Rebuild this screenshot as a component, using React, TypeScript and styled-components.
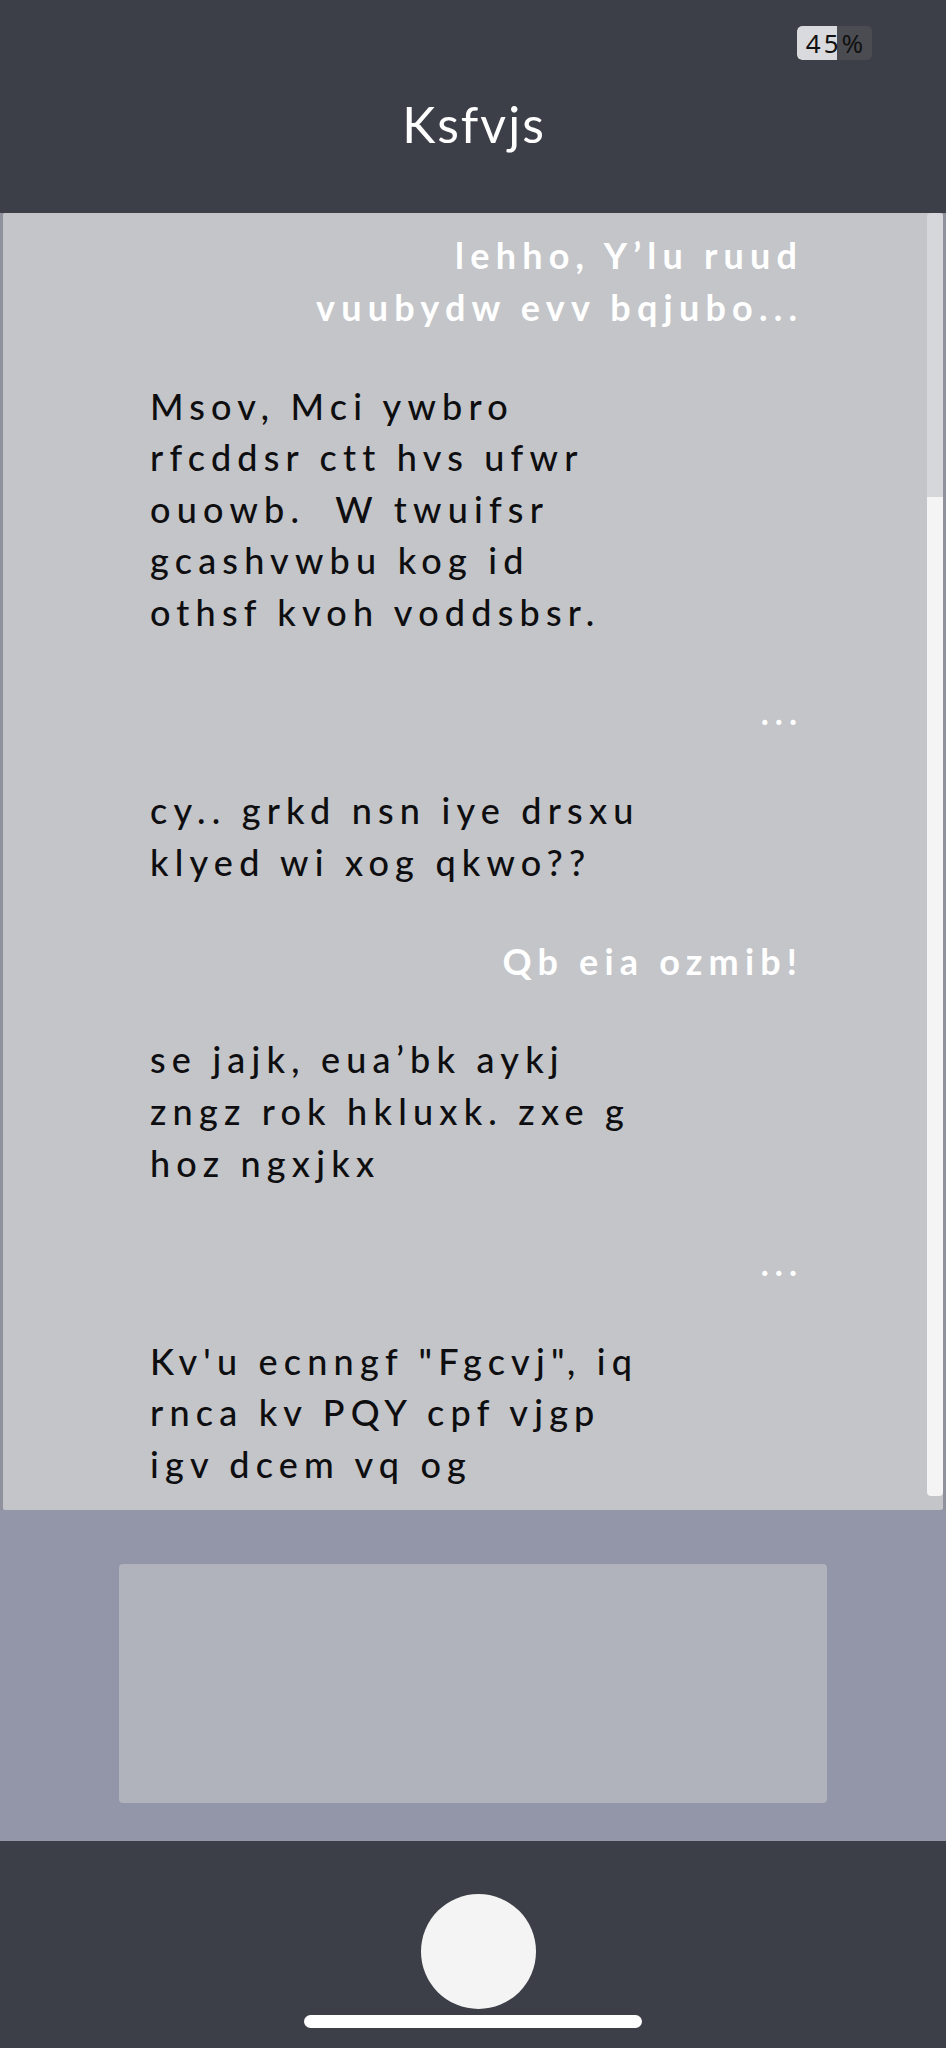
import React from "react";
import styled, { createGlobalStyle } from "styled-components";

const GlobalStyle = createGlobalStyle`
  html, body {
    margin: 0;
    padding: 0;
    background: #3d3f48;
  }
  * { box-sizing: border-box; }
`;

const FONT = `"Lato", "Noto Sans", "DejaVu Sans", sans-serif`;
const SPACING = 6.2;

const Screen = styled.div`
  width: 946px;
  height: 2048px;
  display: flex;
  flex-direction: column;
  background: #3d3f48;
  font-family: ${FONT};
  overflow: hidden;
`;

const Header = styled.header`
  height: 213px;
  flex: none;
  display: flex;
  flex-direction: column;
  align-items: center;
  background: #3d3f48;
`;

const StatusRow = styled.div`
  align-self: stretch;
  display: flex;
  justify-content: flex-end;
  padding: 26px 74px 0 0;
`;

const Battery = styled.div`
  position: relative;
  width: 75px;
  height: 34px;
  border-radius: 5px;
  background: #4b4c52;
  overflow: hidden;
  display: flex;
  align-items: center;
  justify-content: center;
`;

const BatteryFill = styled.div`
  position: absolute;
  left: 0;
  top: 0;
  bottom: 0;
  background: #d9dadd;
  border-radius: 5px 0 0 5px;
`;

const BatteryText = styled.span`
  position: relative;
  margin-left: 3px;
  font-family: "Noto Sans", "DejaVu Sans", sans-serif;
  font-size: 26px;
  line-height: 1;
  letter-spacing: 3px;
  color: #111;
`;

const Title = styled.h1`
  margin: 34px 0 0 2px;
  font-family: ${FONT};
  font-weight: 400;
  font-size: 50px;
  line-height: 60px;
  letter-spacing: 2px;
  color: #ffffff;
`;

const PanelFrame = styled.div`
  flex: none;
  height: 1297px;
  padding: 0 3px;
  background: #8f919d;
  display: flex;
`;

const ChatPanel = styled.section`
  flex: 1;
  display: flex;
  background: #c3c5c9;
  border-radius: 2px;
  overflow: hidden;
`;

const MessageList = styled.div`
  flex: 1;
  display: flex;
  flex-direction: column;
  gap: 47.4px;
  padding: 17px 130px 0 147px;
`;

const Message = styled.p<{ $mine: boolean }>`
  margin: 0;
  white-space: pre;
  font-family: ${FONT};
  font-size: 36px;
  line-height: 51.6px;
  letter-spacing: ${SPACING}px;
  font-weight: ${(p) => (p.$mine ? 700 : 500)};
  color: ${(p) => (p.$mine ? "#ffffff" : "#0e0e10")};
  text-align: ${(p) => (p.$mine ? "right" : "left")};
  margin-right: ${(p) => (p.$mine ? `-${SPACING}px` : "0")};
`;

const Typing = styled.p`
  margin: 0 -6px 0 0;
  text-align: right;
  font-family: ${FONT};
  font-size: 34px;
  line-height: 51.6px;
  font-weight: 700;
  letter-spacing: 6px;
  color: #ffffff;
`;

const ScrollTrack = styled.div`
  flex: none;
  width: 16px;
  padding-bottom: 14px;
  display: flex;
  flex-direction: column;
`;

const ScrollThumb = styled.div`
  height: 284px;
  background: #d6d7da;
  border-radius: 4px 4px 0 0;
`;

const ScrollRest = styled.div`
  flex: 1;
  background: #f4f4f5;
  border-radius: 0 0 4px 4px;
`;

const Composer = styled.div`
  flex: none;
  height: 331px;
  background: #9396a8;
  padding: 54px 119px 38px 119px;
  display: flex;
`;

const InputBox = styled.div`
  flex: 1;
  background: #b0b2bc;
  border-radius: 4px;
`;

const BottomBar = styled.footer`
  flex: 1;
  background: #3d3f48;
  display: flex;
  flex-direction: column;
  align-items: center;
  padding-top: 53px;
`;

const RecordButton = styled.button`
  width: 115px;
  height: 115px;
  border-radius: 50%;
  border: none;
  padding: 0;
  margin-left: 10px;
  background: #f4f4f4;
`;

const HomeIndicator = styled.div`
  width: 338px;
  height: 13px;
  margin-top: 6px;
  border-radius: 7px;
  background: #ffffff;
`;

type Item =
  | { kind: "msg"; mine: boolean; text: string }
  | { kind: "typing" };

const items: Item[] = [
  { kind: "msg", mine: true, text: "lehho, Y’lu ruud\nvuubydw evv bqjubo..." },
  {
    kind: "msg",
    mine: false,
    text:
      "Msov, Mci ywbro\nrfcddsr ctt hvs ufwr\nouowb.  W twuifsr\ngcashvwbu kog id\nothsf kvoh voddsbsr.",
  },
  { kind: "typing" },
  { kind: "msg", mine: false, text: "cy.. grkd nsn iye drsxu\nklyed wi xog qkwo??" },
  { kind: "msg", mine: true, text: "Qb eia ozmib!" },
  {
    kind: "msg",
    mine: false,
    text: "se jajk, eua’bk aykj\nzngz rok hkluxk. zxe g\nhoz ngxjkx",
  },
  { kind: "typing" },
  {
    kind: "msg",
    mine: false,
    text: "Kv'u ecnngf \"Fgcvj\", iq\nrnca kv PQY cpf vjgp\nigv dcem vq og",
  },
];

export default function App() {
  const battery = 53;
  return (
    <>
      <GlobalStyle />
      <Screen>
        <Header>
          <StatusRow>
            <Battery>
              <BatteryFill style={{ width: `${battery}%` }} />
              <BatteryText>45%</BatteryText>
            </Battery>
          </StatusRow>
          <Title>Ksfvjs</Title>
        </Header>
        <PanelFrame>
          <ChatPanel>
            <MessageList>
              {items.map((it, i) =>
                it.kind === "typing" ? (
                  <Typing key={i}>...</Typing>
                ) : (
                  <Message key={i} $mine={it.mine}>
                    {it.text}
                  </Message>
                )
              )}
            </MessageList>
            <ScrollTrack>
              <ScrollThumb />
              <ScrollRest />
            </ScrollTrack>
          </ChatPanel>
        </PanelFrame>
        <Composer>
          <InputBox />
        </Composer>
        <BottomBar>
          <RecordButton aria-label="record" />
          <HomeIndicator />
        </BottomBar>
      </Screen>
    </>
  );
}
